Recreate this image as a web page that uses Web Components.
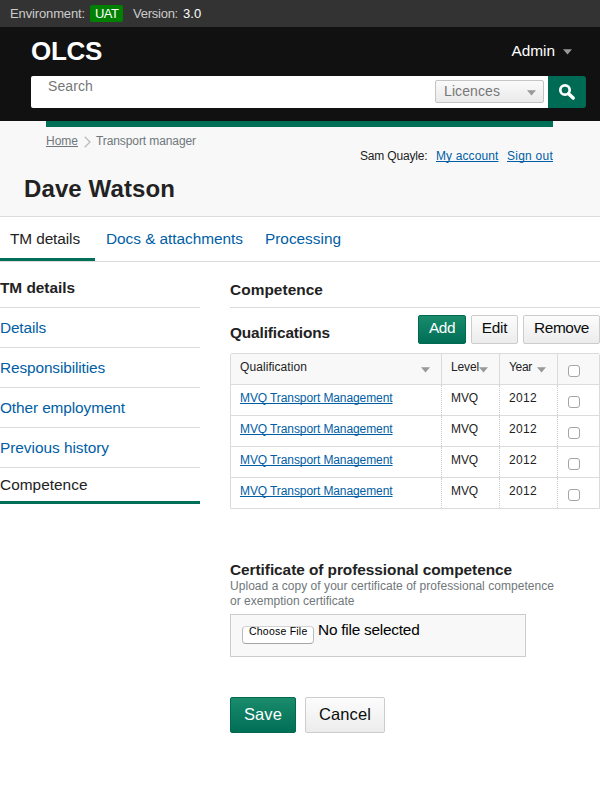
<!DOCTYPE html>
<html lang="en">
<head>
<meta charset="utf-8">
<title>OLCS</title>
<style>
html,body{margin:0;background:#fff}
body{font-family:"Liberation Sans",Arial,sans-serif;color:#222;width:600px;height:805px;overflow:hidden}
</style>
</head>
<body>
<olcs-app></olcs-app>
<script>
const define = (name, html, init) => {
  const template = document.createElement('template');
  template.innerHTML = html;
  customElements.define(name, class extends HTMLElement {
    constructor() {
      super();
      this.attachShadow({ mode: 'open' }).append(template.content.cloneNode(true));
    }
    connectedCallback() { if (init) init(this, this.shadowRoot); }
  });
};

// A single line of text; "fit" tracks its letters out to a given width.
define('ui-text', `<style>
:host{display:block;width:max-content;flex:none;white-space:pre;font-size:15.4px;line-height:20px;height:20px}
:host([link]){color:#005ea5}
:host([bold]){font-weight:700}
:host([underline]){text-decoration:underline;text-decoration-thickness:1px;text-underline-offset:1px;text-decoration-skip-ink:none}
</style><slot></slot>`, host => {
  const size = host.getAttribute('size');
  if (size) host.style.fontSize = size + 'px';
  const fit = parseFloat(host.getAttribute('fit'));
  if (fit) {
    const natural = host.getBoundingClientRect().width;
    host.style.letterSpacing = ((fit - natural) / host.textContent.length).toFixed(3) + 'px';
  }
});

define('ui-caret', `<style>
:host{display:block;flex:none;width:9px;height:6px}svg{display:block}
</style><svg width="9" height="6" viewBox="0 0 9 6"><path d="M0 .3h9L4.5 5.6z" fill="#999"/></svg>`);

define('ui-check', `<style>
:host{display:block;box-sizing:border-box;width:12px;height:12px;border:1px solid #a5a5a5;border-radius:3px;background:#fff}
</style>`);

define('ui-button', `<style>
:host{display:flex;box-sizing:border-box;flex:none;justify-content:center;height:29px;padding-top:2px;border:1px solid #ccc;border-radius:2px;
background:linear-gradient(#fcfcfc,#ececec);color:#0b0c0c}
:host([primary]){background:linear-gradient(#1a8b6b,#006e56);border-color:#00694f;color:#fff}
:host([large]){height:36px;padding-top:6px}
</style><slot></slot>`);

define('env-bar', `<style>
:host{display:flex;box-sizing:border-box;height:27px;background:#333;color:#ccc;padding:4px 0 0 10px}
.tag{box-sizing:border-box;width:33px;height:17px;margin:1px 10px 0 5px;padding-left:5px;background:#008000;border-radius:2px;color:#fff}
.tag ui-text{margin-top:-1px}
.v{color:#fff;margin-left:5px}
</style>
<ui-text size="13" fit="75">Environment:</ui-text>
<div class="tag"><ui-text size="13" fit="23.5">UAT</ui-text></div>
<ui-text size="13" fit="45">Version:</ui-text><ui-text class="v" size="13" fit="18.5">3.0</ui-text>`);

define('site-header', `<style>
:host{display:block;box-sizing:border-box;height:94px;background:#111;color:#fff;padding:9px 14px 0 31px}
.top{display:flex;justify-content:space-between;height:40px}
.logo{line-height:30px;height:30px}
.admin{display:flex;gap:8px;padding:5px 14px 0 0}
.admin ui-caret{margin-top:8px}
.search{display:flex;height:32px}
.field{display:flex;box-sizing:border-box;flex:1;justify-content:space-between;background:#fff;border-radius:2px 0 0 2px;padding:4px 4px 0 17px;color:#777}
.field>ui-text{margin-top:-4px}
.sel{display:flex;box-sizing:border-box;justify-content:space-between;width:109px;height:23px;border:1px solid #c4c4c4;border-radius:2px;background:linear-gradient(#fafafa,#eaeaea);padding:0 7px 0 8px;color:#777}
.sel ui-caret{margin-top:9px}
.go{display:grid;place-items:center;width:38px;background:#006b54;border-radius:0 3px 3px 0}
</style>
<div class="top"><ui-text class="logo" bold size="26" fit="71">OLCS</ui-text>
<div class="admin"><ui-text fit="43.5">Admin</ui-text><ui-caret></ui-caret></div></div>
<div class="search"><div class="field"><ui-text size="14" fit="45">Search</ui-text>
<div class="sel"><ui-text size="14" fit="56">Licences</ui-text><ui-caret></ui-caret></div></div>
<div class="go"><svg width="18" height="18" viewBox="0 0 18 18" fill="none" stroke="#fff"><circle cx="7" cy="7" r="4.7" stroke-width="2.7"/><path d="M10.6 10.7l4.6 4.4" stroke-width="3.4" stroke-linecap="round"/></svg></div></div>`);

define('page-heading', `<style>
:host{display:block;box-sizing:border-box;height:96px;background:#f8f8f8;border-bottom:1px solid #dadcdc}
.bar{height:6px;margin:0 47px 0 46px;background:#006f57}
.row{display:flex;justify-content:space-between;padding:4px 47px 0 46px;height:44px;box-sizing:border-box;color:#6f777b}
.crumbs{display:flex}
.crumbs svg{margin:5px 5px 0 6px}
.user{display:flex;gap:8.5px;padding-top:15px;color:#222}
h1{margin:3px 0 0 24px;font:inherit}
h1 ui-text{height:30px;line-height:30px}
</style>
<div class="bar"></div>
<div class="row"><div class="crumbs"><ui-text underline size="12" fit="32">Home</ui-text>
<svg width="7" height="12" viewBox="0 0 7 12" fill="none" stroke="#b8bbbd" stroke-width="1.3"><path d="M.7.7L6 6 .7 11.3"/></svg>
<ui-text size="12" fit="100">Transport manager</ui-text></div>
<div class="user"><ui-text size="12" fit="67.5">Sam Quayle:</ui-text><ui-text link underline size="12" fit="62.5">My account</ui-text><ui-text link underline size="12" fit="46">Sign out</ui-text></div></div>
<h1><ui-text bold size="24" fit="151">Dave Watson</ui-text></h1>`);

define('tab-bar', `<style>
:host{display:flex;box-sizing:border-box;height:45px;border-bottom:1px solid #dadcdc}
div{box-sizing:border-box;height:44px;padding-top:12px}
.on{width:95px;padding-left:10px;border-bottom:3px solid #006f57}
.a{padding-left:11px}.b{padding-left:22px}
</style>
<div class="on"><ui-text fit="70">TM details</ui-text></div><div class="a"><ui-text link fit="137">Docs &amp; attachments</ui-text></div><div class="b"><ui-text link fit="76">Processing</ui-text></div>`);

define('side-nav', `<style>
:host{display:block;width:200px}
div{box-sizing:border-box;height:40px;padding-top:10px;border-bottom:1px solid #dadcdc}
.t{height:46px;padding-top:16px}
.on{height:36px;padding-top:7px;border-bottom:3px solid #006f57}
</style>
<div class="t"><ui-text bold fit="75">TM details</ui-text></div>
<div><ui-text link fit="46">Details</ui-text></div>
<div><ui-text link fit="105">Responsibilities</ui-text></div>
<div><ui-text link fit="125">Other employment</ui-text></div>
<div><ui-text link fit="109">Previous history</ui-text></div>
<div class="on"><ui-text fit="87.5">Competence</ui-text></div>`);

define('qualification-row', `<style>
:host{display:grid;grid-template-columns:210px 58px 58px 42px;height:30px;border-top:1px solid #dadcdc}
div{padding:3px 0 0 9px;border-left:1px dotted #ccc}
div:first-of-type{border-left:0}
ui-check{margin:8px 0 0 1px}
</style>
<div><ui-text link underline size="12" fit="152.5">MVQ Transport Management</ui-text></div>
<div><ui-text size="12" fit="27">MVQ</ui-text></div>
<div><ui-text size="12" fit="28">2012</ui-text></div>
<div><ui-check></ui-check></div>`);

define('qualification-table', `<style>
:host{display:block;box-sizing:border-box;width:370px;height:156px;border:1px solid #dadcdc;border-radius:2px 2px 0 0}
.h{display:grid;grid-template-columns:210px 58px 58px 42px;height:30px;background:#f8f8f8}
.h div{display:flex;justify-content:space-between;padding:3px 11px 0 9px;border-left:1px solid #dadcdc;min-width:0}
.h div:first-child{border-left:0}
.h ui-caret{margin-top:10px}
ui-check{margin:8px 0 0 1px}
</style>
<div class="h"><div><ui-text size="12" fit="67">Qualification</ui-text><ui-caret></ui-caret></div>
<div><ui-text size="12" fit="28">Level</ui-text><ui-caret></ui-caret></div>
<div><ui-text size="12" fit="23">Year</ui-text><ui-caret></ui-caret></div>
<div><ui-check></ui-check></div></div>
<qualification-row></qualification-row><qualification-row></qualification-row><qualification-row></qualification-row><qualification-row></qualification-row>`);

define('file-picker', `<style>
:host{display:flex;box-sizing:border-box;width:296px;height:43px;margin-top:5px;border:1px solid #ccc;background:#f8f8f8;padding:5px 11px;color:#000}
.b{box-sizing:border-box;width:72px;height:18px;margin:6px 4px 0 0;border:1px solid #bbb;border-top-color:#d4d4d4;border-bottom-color:#a5a5a5;border-radius:4px;background:#fff;padding-left:6px}
.b ui-text{margin-top:-6px}
</style><div class="b"><ui-text size="10.5" fit="58.5">Choose File</ui-text></div><ui-text fit="101.5">No file selected</ui-text>`);

define('competence-form', `<style>
:host{display:block;width:370px}
.t{box-sizing:border-box;height:46px;padding-top:18px;border-bottom:1px solid #dadcdc}
.q{display:flex;justify-content:space-between;height:45px;padding-top:0}
.q>ui-text{margin-top:15px}
.q div{display:flex;gap:5px;padding-top:7px}
.c{margin:51px 0 0;height:16px}
.hint{line-height:15px;height:15px;color:#6f777b}
.acts{display:flex;gap:9px;margin-top:40px}
</style>
<div class="t"><ui-text bold fit="93">Competence</ui-text></div>
<div class="q"><ui-text bold fit="100">Qualifications</ui-text><div><ui-button primary style="width:48px"><ui-text fit="26">Add</ui-text></ui-button><ui-button style="width:47px"><ui-text fit="25.5">Edit</ui-text></ui-button><ui-button style="width:77px"><ui-text fit="55">Remove</ui-text></ui-button></div></div>
<qualification-table></qualification-table>
<ui-text class="c" bold fit="282">Certificate of professional competence</ui-text>
<ui-text class="hint" style="margin-top:3px" size="12" fit="324">Upload a copy of your certificate of professional competence</ui-text>
<ui-text class="hint" size="12" fit="124.5">or exemption certificate</ui-text>
<file-picker></file-picker>
<div class="acts"><ui-button large primary style="width:66px"><ui-text size="16.5" fit="38">Save</ui-text></ui-button><ui-button large style="width:80px"><ui-text size="16.5" fit="52">Cancel</ui-text></ui-button></div>`);

define('olcs-app', `<style>
:host{display:block}
main{display:flex;gap:30px}
</style><env-bar></env-bar><site-header></site-header><page-heading></page-heading><tab-bar></tab-bar>
<main><side-nav></side-nav><competence-form></competence-form></main>`);
</script>
</body>
</html>
